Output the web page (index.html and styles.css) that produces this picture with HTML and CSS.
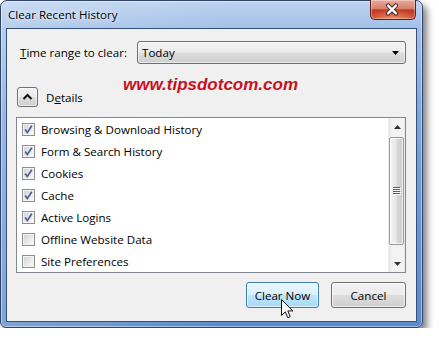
FILE: index.html
```html
<!DOCTYPE html>
<html>
<head>
<meta charset="utf-8">
<title>Clear Recent History</title>
<link rel="stylesheet" href="styles.css">
</head>
<body>
<div class="window">
  <div class="titlebar">
    <span class="title">Clear Recent History</span>
    <div class="close">
      <svg width="46" height="20" viewBox="0 0 46 20">
        <path d="M18.5 5.5 L26.5 13.5 M26.5 5.5 L18.5 13.5" stroke="#3d2320" stroke-width="4.4" stroke-linecap="round" fill="none"/>
        <path d="M18.5 5.5 L26.5 13.5 M26.5 5.5 L18.5 13.5" stroke="#ffffff" stroke-width="2.4" stroke-linecap="round" fill="none"/>
      </svg>
    </div>
  </div>
  <div class="client">
    <div class="range-row">
      <span class="range-label"><u>T</u>ime range to clear:</span>
      <div class="select">
        <span class="select-value">Today</span>
        <svg class="select-arrow" width="8" height="5" viewBox="0 0 8 5"><path d="M0 0 H7 L3.5 4 Z" fill="#000"/></svg>
      </div>
    </div>
    <div class="details-row">
      <div class="details-btn">
        <svg width="19" height="18" viewBox="0 0 19 18"><path d="M5.5 11 L9.5 7 L13.5 11" stroke="#111" stroke-width="2" fill="none"/></svg>
      </div>
      <span class="details-label">D<u>e</u>tails</span>
    </div>
    <div class="list">
      <ul class="items">
        <li class="item"><span class="check on"><svg width="11" height="11" viewBox="0 0 11 11"><path d="M2.2 5.6 L4.3 8.6 L8.8 1.8" stroke="#4b5c92" stroke-width="1.7" fill="none"/></svg></span>Browsing &amp; Download History</li>
        <li class="item"><span class="check on"><svg width="11" height="11" viewBox="0 0 11 11"><path d="M2.2 5.6 L4.3 8.6 L8.8 1.8" stroke="#4b5c92" stroke-width="1.7" fill="none"/></svg></span>Form &amp; Search History</li>
        <li class="item"><span class="check on"><svg width="11" height="11" viewBox="0 0 11 11"><path d="M2.2 5.6 L4.3 8.6 L8.8 1.8" stroke="#4b5c92" stroke-width="1.7" fill="none"/></svg></span>Cookies</li>
        <li class="item"><span class="check on"><svg width="11" height="11" viewBox="0 0 11 11"><path d="M2.2 5.6 L4.3 8.6 L8.8 1.8" stroke="#4b5c92" stroke-width="1.7" fill="none"/></svg></span>Cache</li>
        <li class="item"><span class="check on"><svg width="11" height="11" viewBox="0 0 11 11"><path d="M2.2 5.6 L4.3 8.6 L8.8 1.8" stroke="#4b5c92" stroke-width="1.7" fill="none"/></svg></span>Active Logins</li>
        <li class="item"><span class="check"></span>Offline Website Data</li>
        <li class="item"><span class="check"></span>Site Preferences</li>
      </ul>
      <div class="scrollbar">
        <div class="sb-arrow"><svg width="7" height="4" viewBox="0 0 7 4"><path d="M0 4 H7 L3.5 0 Z" fill="#333"/></svg></div>
        <div class="sb-track">
          <div class="thumb">
            <svg width="8" height="8" viewBox="0 0 8 8">
              <path d="M0 0.5 H7 M0 2.5 H7 M0 4.5 H7 M0 6.5 H7" stroke="#5d5d5d" stroke-width="1"/>
              <path d="M1 1.5 H8 M1 3.5 H8 M1 5.5 H8 M1 7.5 H8" stroke="#ffffff" stroke-width="1"/>
            </svg>
          </div>
        </div>
        <div class="sb-arrow"><svg width="7" height="4" viewBox="0 0 7 4"><path d="M0 0 H7 L3.5 4 Z" fill="#333"/></svg></div>
      </div>
    </div>
    <div class="actions">
      <div class="btn btn-primary">Clear Now</div>
      <div class="btn btn-cancel">Cancel</div>
    </div>
  </div>
  <div class="watermark">www.tipsdotcom.com</div>
  <svg class="cursor" width="13" height="20" viewBox="0 0 13 20">
    <path d="M0.5 0.5 V16.5 L4.3 12.8 L6.8 18.7 L9.2 17.7 L6.8 11.9 H11.8 Z" fill="#fff" stroke="#111" stroke-width="1" stroke-linejoin="round"/>
  </svg>
</div>
</body>
</html>
```

FILE: styles.css
```css
* { box-sizing: border-box; }

html, body {
  margin: 0;
  padding: 0;
  background: #ffffff;
}

body {
  font-family: "Open Sans", "Noto Sans", sans-serif;
  font-size: 11.6px;
  color: #000;
}

.window {
  position: relative;
  width: 423px;
  height: 328px;
  border: 1px solid #2f4468;
  border-radius: 7px 7px 6px 6px;
  background:
    linear-gradient(to right, rgba(255,255,255,0.22), rgba(255,255,255,0) 55%),
    linear-gradient(to bottom, #bdd3ef 0, #a2c0e7 28px, #7ea7dc 110px, #6a99d6 200px, #5a8acb 100%);
  box-shadow: 4px 5px 7px rgba(0,0,0,0.5), inset 0 0 0 1px rgba(255,255,255,0.45);
  display: flex;
  flex-direction: column;
}

.titlebar {
  height: 27px;
  display: flex;
  align-items: flex-start;
  padding-left: 7px;
}

.title {
  line-height: 27px;
  text-shadow: 0 0 6px #eaf1fb, 0 0 3px #eaf1fb;
}

.close {
  margin-left: auto;
  margin-right: 6px;
  margin-top: -1px;
  width: 46px;
  height: 20px;
  border: 1px solid #5b2118;
  border-top: none;
  border-radius: 0 0 5px 5px;
  background:
    radial-gradient(ellipse 60% 50% at 50% 100%, rgba(255,170,120,0.7), rgba(255,170,120,0) 100%),
    linear-gradient(to bottom, #e8aa9c 0%, #d9806f 45%, #c23a24 52%, #c94a30 100%);
  box-shadow: inset 0 0 0 1px rgba(255,255,255,0.35);
  display: flex;
}

.close svg { margin-left: -1px; }

.client {
  flex: 1;
  margin: 0 5px 5px;
  border: 1px solid #34507a;
  background: #f0f0f0;
  padding: 12px 10px 0 9px;
  display: flex;
  flex-direction: column;
}

.range-row {
  display: flex;
  align-items: center;
  height: 23px;
}

.range-label {
  margin-left: 4px;
  width: 117px;
  flex: none;
}

.select {
  flex: 1;
  height: 23px;
  border: 1px solid #707070;
  border-radius: 3px;
  background: linear-gradient(to bottom, #f2f2f2 0%, #ebebeb 48%, #dddddd 52%, #cfcfcf 100%);
  box-shadow: inset 0 0 0 1px rgba(255,255,255,0.55);
  display: flex;
  align-items: center;
  padding-left: 4px;
}

.select-value { flex: 1; }

.select-arrow { margin-right: 5px; margin-top: 1px; }

.details-row {
  margin-top: 23px;
  height: 20px;
  display: flex;
  align-items: center;
}

.details-btn {
  margin-left: 1px;
  width: 21px;
  height: 20px;
  border: 1px solid #707070;
  border-radius: 3px;
  background: linear-gradient(to bottom, #f2f2f2 0%, #ebebeb 48%, #dddddd 52%, #cfcfcf 100%);
  box-shadow: inset 0 0 0 1px rgba(255,255,255,0.6);
  display: flex;
}

.details-label { margin-left: 8px; }

.list {
  margin-top: 10px;
  height: 156px;
  border: 1px solid #828790;
  background: #ffffff;
  display: flex;
}

.items {
  flex: 1;
  list-style: none;
  margin: 0;
  padding: 0;
}

.item {
  height: 22px;
  display: flex;
  align-items: center;
  padding-left: 5px;
}

.check {
  width: 13px;
  height: 13px;
  margin-right: 6px;
  border: 1px solid #8e8f8f;
  background: linear-gradient(135deg, #cfd0d2 0%, #e9e9ea 55%, #fbfbfb 100%);
  box-shadow: inset 0 0 0 1px #f4f4f4;
  display: flex;
  align-items: center;
  justify-content: center;
  flex: none;
}

.scrollbar {
  width: 17px;
  display: flex;
  flex-direction: column;
  background: linear-gradient(to right, #e6e6e6 0, #f3f3f3 3px, #f3f3f3 14px, #e9e9e9 100%);
  border-left: 1px solid #ececec;
}

.sb-arrow {
  height: 17px;
  display: flex;
  align-items: center;
  justify-content: center;
  flex: none;
}

.sb-track {
  flex: 1;
  padding: 2px 1px 10px 0;
  display: flex;
}

.thumb {
  flex: 1;
  border: 1px solid #9b9b9b;
  border-radius: 2px;
  background: linear-gradient(to right, #f4f4f4 0%, #e8e8e8 45%, #d8d8d8 55%, #cdcdcd 100%);
  box-shadow: inset 0 0 0 1px rgba(255,255,255,0.7);
  display: flex;
  align-items: center;
  justify-content: center;
}

.actions {
  margin-top: 9px;
  display: flex;
  justify-content: flex-end;
  gap: 12px;
}

.btn {
  height: 26px;
  border-radius: 3px;
  display: flex;
  align-items: center;
  justify-content: center;
}

.btn-primary {
  width: 73px;
  border: 1px solid #3c7fb1;
  background: linear-gradient(to bottom, #eaf6fd 0%, #d9f0fc 48%, #bee6fd 52%, #a7d9f5 100%);
  box-shadow: inset 0 0 0 1px rgba(255,255,255,0.6);
}

.btn-cancel {
  width: 75px;
  border: 1px solid #707070;
  background: linear-gradient(to bottom, #f2f2f2 0%, #ebebeb 48%, #dddddd 52%, #cfcfcf 100%);
  box-shadow: inset 0 0 0 1px rgba(255,255,255,0.6);
}

.watermark {
  position: absolute;
  left: 122px;
  top: 75px;
  font-family: "Liberation Sans", Arial, sans-serif;
  font-size: 17px;
  line-height: 17px;
  font-weight: bold;
  font-style: italic;
  color: #c8101e;
}

.cursor {
  position: absolute;
  left: 280px;
  top: 298px;
}
```
